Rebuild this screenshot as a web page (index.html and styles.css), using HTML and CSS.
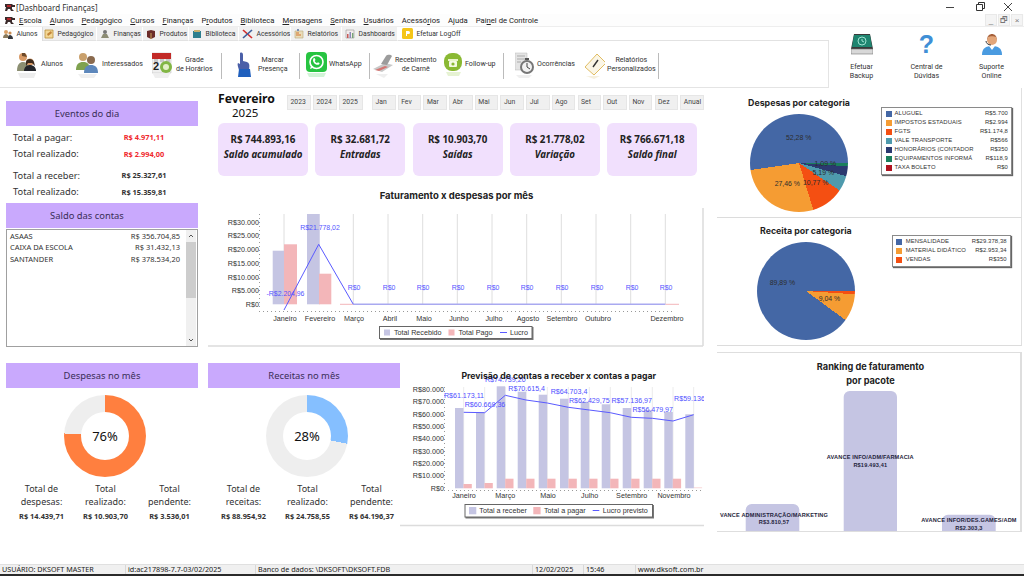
FILE: index.html
```html
<!DOCTYPE html>
<html lang="pt-BR">
<head>
<meta charset="utf-8">
<title>[Dashboard Finanças]</title>
<link rel="stylesheet" href="styles.css">
</head>
<body>
<div class="app">
  <header class="titlebar">
    <svg class="logo" width="10" height="10" viewBox="0 0 10 10"><path d="M0 2h7l1 1h2v2H7v2l2 2H6L5 7H3L2 9H0l1-4H0z" fill="#3a2a2a"/><path d="M2 3h4v2H2z" fill="#b3262b"/></svg>
    <span class="title-text">[Dashboard Finanças]</span>
    <div class="winbtns">
      <svg width="78" height="12" viewBox="0 0 78 12"><path d="M0 6.5h8" stroke="#444"/><path d="M30.5 3.5h6v6h-6zM32.5 3.5v-2h6v6h-2" fill="none" stroke="#333"/><path d="M58 2l8 8M66 2l-8 8" stroke="#444"/></svg>
    </div>
  </header>
  <nav class="menubar">
    <svg class="logo" width="10" height="10" viewBox="0 0 10 10"><path d="M0 2h7l1 1h2v2H7v2l2 2H6L5 7H3L2 9H0l1-4H0z" fill="#3a2a2a"/><path d="M2 3h4v2H2z" fill="#b3262b"/></svg>
    <span class="menu-item"><u>E</u>scola</span><span class="menu-item"><u>A</u>lunos</span><span class="menu-item"><u>P</u>edagógico</span><span class="menu-item"><u>C</u>ursos</span><span class="menu-item"><u>F</u>inanças</span><span class="menu-item">P<u>r</u>odutos</span><span class="menu-item"><u>B</u>iblioteca</span><span class="menu-item"><u>M</u>ensagens</span><span class="menu-item"><u>S</u>enhas</span><span class="menu-item"><u>U</u>suários</span><span class="menu-item">Acessó<u>r</u>ios</span><span class="menu-item">A<u>j</u>uda</span><span class="menu-item">Pai<u>n</u>el de Controle</span>
    <div class="mdi"><span class="mdi-btn">_</span><span class="mdi-btn">🗗</span><span class="mdi-btn">×</span></div>
  </nav>

  <section class="toolbar">
    <div class="toolbar-left">
      <div class="tabs">
        <span class="tab tab-active"><svg width="10" height="10" viewBox="0 0 10 10"><circle cx="3" cy="3" r="2" fill="#d9a066"/><path d="M0 9c0-3 2-4 3-4s3 1 3 4z" fill="#8a7a5c"/><circle cx="7" cy="4" r="1.6" fill="#c98d52"/><path d="M5 10c0-3 1-4 2-4s3 1 3 4z" fill="#33363c"/></svg>Alunos</span>
        <span class="tab"><svg width="10" height="10" viewBox="0 0 10 10"><path d="M1 1h8v8H1z" fill="#f3d795" stroke="#b98f3b" stroke-width=".8"/><path d="M3 5l4-3 1 2-4 3z" fill="#c2853a"/></svg>Pedagógico</span>
        <span class="tab"><svg width="10" height="10" viewBox="0 0 10 10"><circle cx="5" cy="3" r="2" fill="#777"/><path d="M1 9l2-4h4l2 4z" fill="#8c8c74"/></svg>Finanças</span>
        <span class="tab"><svg width="10" height="10" viewBox="0 0 10 10"><path d="M1 2l4-1 4 1v6l-4 2-4-2z" fill="#6c2d2a"/><path d="M5 4v6" stroke="#c9a35a"/></svg>Produtos</span>
        <span class="tab"><svg width="10" height="10" viewBox="0 0 10 10"><path d="M1 2h8v7H1z" fill="#2d7f8e"/><path d="M2 1h6v2H2z" fill="#c9b06e"/></svg>Biblioteca</span>
        <span class="tab"><svg width="11" height="10" viewBox="0 0 11 10"><path d="M1 1l9 8" stroke="#d22d2d" stroke-width="1.6"/><path d="M10 1L1 9" stroke="#3d5f9b" stroke-width="1.6"/></svg>Acessórios</span>
        <span class="tab"><svg width="10" height="10" viewBox="0 0 10 10"><path d="M1 2h8v7H1z" fill="#eadcb8" stroke="#b9a77a" stroke-width=".6"/><path d="M2 4h3M2 6h5" stroke="#d0732f"/><path d="M3 0h2v2H3z" fill="#7a8fb5"/></svg>Relatórios</span>
        <span class="tab"><svg width="10" height="10" viewBox="0 0 10 10"><path d="M1 1h8v8H1z" fill="#f3ecec" stroke="#999" stroke-width=".6"/><path d="M2 5h1.5v4H2z" fill="#c95757"/><path d="M4.500 3H6v6H4.500z" fill="#8a8ab8"/><path d="M7 4h1.400v5H7z" fill="#77a377"/></svg>Dashboards</span>
        <span class="tab tab-plain"><svg width="11" height="11" viewBox="0 0 11 11"><rect width="11" height="11" rx="1.5" fill="#f5c518"/><path d="M4 3h2.500a1.500 1.500 0 010 3H5v2H4z" fill="#fff"/></svg>Efetuar LogOff</span>
      </div>
      <div class="ribbon">
        <div class="rib-item"><svg width="23" height="27" viewBox="0 0 23 27"><circle cx="7" cy="5" r="4" fill="#d89a66"/><path d="M6 1h3l2 4-5-1z" fill="#6c4a2a"/><path d="M1 19c0-7 3-9 6-9s4 1 5 3v6z" fill="#8c8f72"/><circle cx="14" cy="10" r="3.500" fill="#d89a66"/><path d="M10 10c0-4 7-4 8 0l1 4-3-3h-4l-2 3z" fill="#3c2a1c"/><path d="M8 19c0-4 3-6 6-6s6 2 6 6z" fill="#23252b"/><path d="M2 21h18l-2 5H4z" fill="#e6e6e6" opacity=".7"/></svg><span class="rib-label">Alunos</span></div>
        <div class="rib-item"><svg width="24" height="27" viewBox="0 0 24 27"><circle cx="7" cy="5" r="4" fill="#c9a06c"/><path d="M0 18c0-6 3-8 7-8s6 2 6 4v4z" fill="#7fa24f"/><circle cx="15" cy="8" r="4" fill="#8a6a4e"/><path d="M8 21c0-6 3-8 7-8s7 2 7 8z" fill="#5d87bb"/><path d="M2 22h19l-3 4H5z" fill="#e8e8e8" opacity=".7"/></svg><span class="rib-label">Interessados</span></div>
        <div class="rib-item"><svg width="22" height="27" viewBox="0 0 22 27"><path d="M0 1h19v20H0z" fill="#efefef" stroke="#bbb" stroke-width=".5"/><path d="M0 1h19v6H0z" fill="#c22a27"/><path d="M2 7h4v3H2zM8 7h4v3H8zM14 7h4v3h-4z" fill="#333" opacity=".2"/><text x="1" y="18" class="cal-num">2</text><circle cx="14" cy="15" r="6" fill="#82b644"/><circle cx="14" cy="15" r="3" fill="#e4f0c8"/><path d="M1 22h17l-2 4H3z" fill="#e8e8e8" opacity=".7"/></svg><span class="rib-label">Grade<br>de Horários</span></div>
        <div class="rib-sep"></div>
        <div class="rib-item"><svg width="21" height="27" viewBox="0 0 21 27"><path d="M5 1c2-1 3 0 3 2v6l4 1c2 1 3 2 2 8H4c-1-3-2-6-1-7l2 1z" fill="#4a5fa8"/><path d="M4 17h11l1 8H3z" fill="#1f5fbd"/></svg><span class="rib-label">Marcar<br>Presença</span></div>
        <div class="rib-sep"></div>
        <div class="rib-item"><svg width="21" height="27" viewBox="0 0 21 27"><rect width="21" height="20" y="0" rx="4" fill="#27c441"/><circle cx="10.500" cy="10" r="6.500" fill="none" stroke="#fff" stroke-width="1.6"/><path d="M4 17l1.300-4 2.600 2.600z" fill="#fff"/><path d="M7.500 6.500c1-1 1.500 0 2 1.500l-.8 1c.5 1 1.200 1.600 2.300 2.100l1-.8c1.400.6 2.100 1 1.200 2-2.500 2-7.800-2-5.700-5.800z" fill="#fff"/><path d="M1 21h19l-2 4H3z" fill="#bff0c6" opacity=".7"/></svg><span class="rib-label">WhatsApp</span></div>
        <div class="rib-sep"></div>
        <div class="rib-item"><svg width="20" height="27" viewBox="0 0 20 27"><path d="M0 17l12-6 8 2-11 7z" fill="#c8c8c8"/><path d="M8 12l5-8c2-2 5-1 6 0l-5 9z" fill="#9c9c9c"/><path d="M2 18l10-4 3 1-9 4z" fill="#d9534f" opacity=".7"/><path d="M3 22h12l-4 4z" fill="#e8e8e8" opacity=".7"/></svg><span class="rib-label">Recebimento<br>de Carnê</span></div>
        <div class="rib-item"><svg width="19" height="27" viewBox="0 0 19 27"><rect width="18" height="18" x="0" y="1" rx="8" fill="#8ab933"/><path d="M4 7h10v2H4z" fill="#e9f5c9"/><rect x="5" y="9" width="8" height="6" rx="1" fill="#f4f9e2"/><circle cx="9" cy="12" r="1.600" fill="#8ab933"/><path d="M2 20h15l-2 4H4z" fill="#dcecc0" opacity=".7"/></svg><span class="rib-label">Follow-up</span></div>
        <div class="rib-sep"></div>
        <div class="rib-item"><svg width="20" height="27" viewBox="0 0 20 27"><path d="M0 1h12v17H0z" fill="#e4e4e4" stroke="#bbb" stroke-width=".5"/><path d="M2 4h8M2 7h8M2 10h4" stroke="#aaa"/><circle cx="12" cy="15" r="7" fill="#777"/><circle cx="12" cy="15" r="5" fill="#f2f2f2"/><path d="M12 11v4l3 2" stroke="#444" fill="none"/><path d="M10 6h4v2h-4z" fill="#555"/><path d="M1 23h16l-3 3H4z" fill="#e8e8e8" opacity=".7"/></svg><span class="rib-label">Ocorrências</span></div>
        <div class="rib-item"><svg width="20" height="27" viewBox="0 0 20 27"><path d="M0 15L12 2l9 9L9 23z" fill="#fbf6e6" stroke="#e0bc62"/><path d="M8 15l5-7" stroke="#333" stroke-width="1.400"/><path d="M1 24h14l-6 3z" fill="#f0e6c8" opacity=".6"/></svg><span class="rib-label">Relatórios<br>Personalizados</span></div>
        <div class="rib-sep"></div>
      </div>
    </div>
    <div class="tools">
      <div class="tool"><svg width="22" height="22" viewBox="0 0 22 22"><path d="M3 1h16l3 15H0z" fill="#3a3a3a"/><path d="M3 2h16l2 12H1z" fill="#1f8570"/><circle cx="11" cy="8" r="4" fill="none" stroke="#9fe3d2"/><path d="M11 6v2l2 1" stroke="#9fe3d2" fill="none"/><path d="M0 16h22v5H0z" fill="#d8d8d8" stroke="#777" stroke-width=".6"/></svg><span class="tool-label">Efetuar<br>Backup</span></div>
      <div class="tool"><span class="qmark">?</span><span class="tool-label">Central de<br>Dúvidas</span></div>
      <div class="tool"><svg width="22" height="22" viewBox="0 0 22 22"><circle cx="11" cy="7" r="5" fill="#e3a679"/><path d="M6 7c0-8 10-8 10 0l-1-3c-2-1-6-1-8 0z" fill="#a5603a"/><path d="M1 22c0-7 4-9 10-9s10 2 10 9z" fill="#4a9be0"/><path d="M8 13l3 4 3-4z" fill="#fff"/><path d="M5 8c0 2 2 4 5 4" fill="none" stroke="#333"/></svg><span class="tool-label">Suporte<br>Online</span></div>
    </div>
  </section>

  <main class="content">
    <section class="row-top">
      <aside class="col-left">
        <h2 class="heading heading-side">Eventos do dia</h2>
        <div class="events">
          <div class="event"><span>Total a pagar:</span><b class="neg">R$ 4.971,11</b></div>
          <div class="event"><span>Total realizado:</span><b class="neg">R$ 2.994,00</b></div>
          <div class="event event-gap"><span>Total a receber:</span><b>R$ 25.327,61</b></div>
          <div class="event"><span>Total realizado:</span><b>R$ 15.359,81</b></div>
        </div>
        <h2 class="heading heading-side heading-tall">Saldo das contas</h2>
        <div class="accounts">
          <div class="account-rows">
            <div class="account"><span>ASAAS</span><span>R$ 356.704,85</span></div>
            <div class="account"><span>CAIXA DA ESCOLA</span><span>R$ 31.432,13</span></div>
            <div class="account"><span>SANTANDER</span><span>R$ 378.534,20</span></div>
          </div>
          <div class="scrollbar">
            <svg width="10" height="10" viewBox="0 0 10 10"><path d="M3 6l2-2 2 2" fill="none" stroke="#555"/></svg>
            <div class="thumb"></div>
            <div class="track"></div>
            <svg width="10" height="10" viewBox="0 0 10 10"><path d="M3 4l2 2 2-2" fill="none" stroke="#555"/></svg>
          </div>
        </div>
      </aside>

      <div class="col-mid">
        <div class="period">
          <div class="period-name"><strong>Fevereiro</strong><span>2025</span></div>
          <div class="btns btns-year"><span class="btn">2023</span><span class="btn">2024</span><span class="btn">2025</span></div>
          <div class="btns btns-month"><span class="btn">Jan</span><span class="btn">Fev</span><span class="btn">Mar</span><span class="btn">Abr</span><span class="btn">Mai</span><span class="btn">Jun</span><span class="btn">Jul</span><span class="btn">Ago</span><span class="btn">Set</span><span class="btn">Out</span><span class="btn">Nov</span><span class="btn">Dez</span><span class="btn">Anual</span></div>
        </div>
        <div class="cards">
          <div class="card"><b>R$ 744.893,16</b><i>Saldo acumulado</i></div>
          <div class="card"><b>R$ 32.681,72</b><i>Entradas</i></div>
          <div class="card"><b>R$ 10.903,70</b><i>Saídas</i></div>
          <div class="card"><b>R$ 21.778,02</b><i>Variação</i></div>
          <div class="card"><b>R$ 766.671,18</b><i>Saldo final</i></div>
        </div>
        <svg class="chart" width="496" height="172" viewBox="208 176 496 172">
          <text x="456.500" y="199" class="c-title c-center">Faturamento x despesas por mês</text>
          <path d="M703 208v138M208 346h495" class="c-frame"/>
          <path d="M284 214v90M318.700 214v90M353.300 214v90M388 214v90M422.700 214v90M457.300 214v90M492 214v90M526.700 214v90M561.300 214v90M596 214v90M630.700 214v90M665.300 214v90" class="c-grid"/>
          <path d="M259.500 214v96M259 311.500h415" class="c-ticks"/>
          <rect x="272.700" y="250.700" width="11.300" height="53.600" class="c-bar"/>
          <rect x="284" y="244.300" width="13" height="60" class="c-pink"/>
          <rect x="307" y="214" width="12.700" height="90.300" class="c-bar"/>
          <rect x="319" y="273.700" width="12.300" height="30.600" class="c-pink"/>
          <path d="M340 304.300h13M665.300 304.300h13.700" class="c-pink-line"/>
          <path d="M353.300 304.300h312" class="c-zero"/>
          <path d="M284 310L318.700 244.300 353.300 304.300" class="c-line"/>
          <g class="c-axis c-end">
            <text x="259" y="224.500">R$30.000</text><text x="259" y="238">R$25.000</text><text x="259" y="251.700">R$20.000</text><text x="259" y="265.500">R$15.000</text><text x="259" y="279.500">R$10.000</text><text x="259" y="293">R$5.000</text><text x="259" y="307">R$0</text>
          </g>
          <g class="c-axis c-center">
            <text x="285" y="320.500">Janeiro</text><text x="320" y="320.500">Fevereiro</text><text x="354" y="320.500">Março</text><text x="390" y="320.500">Abril</text><text x="424" y="320.500">Maio</text><text x="459" y="320.500">Junho</text><text x="494" y="320.500">Julho</text><text x="528" y="320.500">Agosto</text><text x="562" y="320.500">Setembro</text><text x="598" y="320.500">Outubro</text><text x="667" y="320.500">Dezembro</text>
          </g>
          <g class="c-val c-center">
            <text x="320" y="229.500">R$21.778,02</text><text x="285.500" y="295.500">-R$2.204,96</text>
            <text x="354" y="290">R$0</text><text x="389" y="290">R$0</text><text x="423" y="290">R$0</text><text x="458" y="290">R$0</text><text x="493" y="290">R$0</text><text x="527" y="290">R$0</text><text x="562" y="290">R$0</text><text x="597" y="290">R$0</text><text x="632" y="290">R$0</text><text x="666" y="290">R$0</text>
          </g>
          <rect x="379.500" y="326.500" width="152.500" height="12" class="c-legend"/>
          <rect x="384" y="329.500" width="6" height="6" class="c-bar"/>
          <rect x="448.500" y="329.500" width="6" height="6" class="c-pink"/>
          <path d="M500 332.500h7" class="c-line"/>
          <g class="c-axis"><text x="394" y="335">Total Recebido</text><text x="458.500" y="335">Total Pago</text><text x="510" y="335">Lucro</text></g>
        </svg>
      </div>

      <div class="col-right">
        <div class="cat cat-a">
          <div class="pie-col">
            <h3 class="cat-title">Despesas por categoria</h3>
            <div class="pie pie-desp">
              <span class="pie-lbl lbl-a1">52,28 %</span><span class="pie-lbl lbl-a2">1,09 %</span><span class="pie-lbl lbl-a3">5,19 %</span><span class="pie-lbl lbl-a4">10,77 %</span><span class="pie-lbl lbl-a5">27,46 %</span>
            </div>
          </div>
          <div class="legend">
            <div class="lg"><i class="s-blue"></i><span>ALUGUEL</span><em>R$5.700</em></div>
            <div class="lg"><i class="s-orange"></i><span>IMPOSTOS ESTADUAIS</span><em>R$2.994</em></div>
            <div class="lg"><i class="s-red"></i><span>FGTS</span><em>R$1.174,8</em></div>
            <div class="lg"><i class="s-teal"></i><span>VALE TRANSPORTE</span><em>R$566</em></div>
            <div class="lg"><i class="s-navy"></i><span>HONORÁRIOS (CONTADOR</span><em>R$350</em></div>
            <div class="lg"><i class="s-green"></i><span>EQUIPAMENTOS INFORMÁ</span><em>R$118,9</em></div>
            <div class="lg"><i class="s-crimson"></i><span>TAXA BOLETO</span><em>R$0</em></div>
          </div>
        </div>
        <div class="cat cat-b">
          <div class="pie-col">
            <h3 class="cat-title">Receita por categoria</h3>
            <div class="pie pie-rec">
              <span class="pie-lbl lbl-b1">89,89 %</span><span class="pie-lbl lbl-b2">9,04 %</span>
            </div>
          </div>
          <div class="legend">
            <div class="lg"><i class="s-blue"></i><span>MENSALIDADE</span><em>R$29.378,38</em></div>
            <div class="lg"><i class="s-orange"></i><span>MATERIAL DIDÁTICO</span><em>R$2.953,34</em></div>
            <div class="lg"><i class="s-red"></i><span>VENDAS</span><em>R$350</em></div>
          </div>
        </div>
      </div>
    </section>

    <section class="row-bottom">
      <div class="summary">
        <h2 class="heading">Despesas no mês</h2>
        <div class="donut donut-desp"><div class="donut-hole">76%</div></div>
        <div class="totals">
          <div class="total"><span>Total de<br>despesas:</span><b>R$ 14.439,71</b></div>
          <div class="total"><span>Total<br>realizado:</span><b>R$ 10.903,70</b></div>
          <div class="total"><span>Total<br>pendente:</span><b>R$ 3.536,01</b></div>
        </div>
      </div>
      <div class="summary">
        <h2 class="heading">Receitas no mês</h2>
        <div class="donut donut-rec"><div class="donut-hole">28%</div></div>
        <div class="totals">
          <div class="total"><span>Total de<br>receitas:</span><b>R$ 88.954,92</b></div>
          <div class="total"><span>Total<br>realizado:</span><b>R$ 24.758,55</b></div>
          <div class="total"><span>Total<br>pendente:</span><b>R$ 64.196,37</b></div>
        </div>
      </div>
      <svg class="forecast" width="304" height="180" viewBox="400 348 304 180">
        <path d="M463.700 387v101M484.700 387v101M505.300 387v101M526 387v101M547.300 387v101M568.300 387v101M589.300 387v101M610.300 387v101M631.300 387v101M652.300 387v101M673 387v101M693.700 387v101" class="c-grid-light"/>
        <path d="M444.500 387v102M444 490.500h260" class="c-ticks"/>
        <g class="c-bar">
          <rect x="455" y="408" width="8.500" height="80.300"/><rect x="476" y="412.300" width="8.500" height="76"/><rect x="496.700" y="386.300" width="8.500" height="102"/><rect x="517.700" y="391.700" width="8.500" height="96.600"/><rect x="538.700" y="394.700" width="8.500" height="93.600"/><rect x="560" y="398.700" width="8.500" height="89.600"/><rect x="580.700" y="401.700" width="8.500" height="86.600"/><rect x="601.700" y="404.300" width="8.500" height="84"/><rect x="622.700" y="408" width="8.500" height="80.300"/><rect x="643.700" y="410" width="8.500" height="78.300"/><rect x="664.300" y="412" width="8.500" height="76.300"/><rect x="685.300" y="414.300" width="8.500" height="74"/>
        </g>
        <g class="c-pink">
          <rect x="463.500" y="484" width="8.300" height="4.300"/><rect x="484.500" y="483" width="8.300" height="5.300"/><rect x="505.200" y="478.700" width="8.300" height="9.600"/><rect x="526.200" y="478.700" width="8.300" height="9.600"/><rect x="547.200" y="478.700" width="8.300" height="9.600"/><rect x="568.500" y="478.700" width="8.300" height="9.600"/><rect x="589.200" y="478.700" width="8.300" height="9.600"/><rect x="610.200" y="478.700" width="8.300" height="9.600"/><rect x="631.200" y="478.700" width="8.300" height="9.600"/><rect x="652.200" y="478.700" width="8.300" height="9.600"/><rect x="672.800" y="478.700" width="8.300" height="9.600"/><rect x="693.800" y="487" width="8.300" height="1.300" opacity=".4"/>
        </g>
        <path d="M463.700 412.300L484.700 412.700 505.300 395.300 526 400 547.300 403 568.300 407.300 589.300 410 610.300 412.700 631.300 417.300 652.300 418.300 673 421 693.700 414.700" class="c-line"/>
        <g class="c-axis c-end">
          <text x="444" y="391.800">R$80.000</text><text x="444" y="404.200">R$70.000</text><text x="444" y="416.500">R$60.000</text><text x="444" y="428.800">R$50.000</text><text x="444" y="441.200">R$40.000</text><text x="444" y="453.500">R$30.000</text><text x="444" y="465.800">R$20.000</text><text x="444" y="478.200">R$10.000</text><text x="444" y="490.800">R$0</text>
        </g>
        <g class="c-axis c-center">
          <text x="464" y="498">Janeiro</text><text x="505.300" y="498">Março</text><text x="548" y="498">Maio</text><text x="589.700" y="498">Julho</text><text x="631.700" y="498">Setembro</text><text x="674" y="498">Novembro</text>
        </g>
        <g class="c-val2 c-center">
          <text x="464" y="398">R$61.173,11</text><text x="485" y="407">R$60.669,36</text><text x="505.300" y="381.500">R$74.739,20</text><text x="526.700" y="390.500">R$70.615,4</text><text x="569" y="393.500">R$64.703,4</text><text x="589.300" y="402.500">R$62.429,75</text><text x="631.700" y="403">R$57.136,97</text><text x="652.700" y="411.500">R$56.479,97</text><text x="689.500" y="401">R$59.136</text>
        </g>
        <text x="558.700" y="379" class="c-title2 c-center">Previsão de contas a receber x contas a pagar</text>
        <rect x="465" y="504.500" width="187.500" height="12.500" class="c-legend"/>
        <rect x="469" y="507" width="7.300" height="7.300" class="c-bar"/>
        <rect x="533.300" y="507" width="7.300" height="7.300" class="c-pink"/>
        <path d="M592.700 510.500h6.600" class="c-line"/>
        <g class="c-axis"><text x="479.300" y="513">Total a receber</text><text x="544" y="513">Total a pagar</text><text x="602.700" y="513">Lucro previsto</text></g>
        <path d="M400 525.500h304" class="c-frame"/>
      </svg>
      <div class="ranking">
        <svg width="303" height="178" viewBox="717 353 303 178">
          <text x="870.500" y="370" class="c-title3 c-center">Ranking de faturamento</text>
          <text x="870.500" y="384" class="c-title3 c-center">por pacote</text>
          <path d="M745.700 531v-21a6 6 0 016-6h41.600a6 6 0 016 6v21z" class="c-bar"/>
          <path d="M843.700 531V397a6 6 0 016-6H891a6 6 0 016 6v134z" class="c-bar"/>
          <path d="M942 531v-10.300a6 6 0 016-6h41.700a6 6 0 016 6V531z" class="c-bar"/>
          <g class="c-rank c-center">
            <text x="774" y="516.500">VANCE ADMINISTRAÇÃO/MARKETING</text><text x="774" y="524">R$3.810,57</text>
            <text x="870.300" y="459">AVANCE INFO/ADM/FARMACIA</text><text x="870.300" y="467">R$19.493,41</text>
            <text x="969" y="521.500">AVANCE INFOR/DES.GAMES/ADM</text><text x="969" y="529.500">R$2.303,3</text>
          </g>
        </svg>
      </div>
    </section>
  </main>

  <footer class="status">
    <span class="st st1">USUÁRIO: DKSOFT MASTER</span>
    <span class="st st2">id:ac217898-7.7-03/02/2025</span>
    <span class="st st3">Banco de dados: \DKSOFT\DKSOFT.FDB</span>
    <span class="st st4">12/02/2025</span>
    <span class="st st5">15:46</span>
    <span class="st st6">www.dksoft.com.br</span>
  </footer>
  <div class="taskbar"></div>
</div>
</body>
</html>
```

FILE: styles.css
```css
* { box-sizing: border-box; margin: 0; padding: 0; }
html, body { width: 1024px; height: 576px; overflow: hidden; background: #fff; }
body { font-family: "Noto Sans", "Open Sans", sans-serif; color: #222; }
.app { width: 1024px; height: 576px; display: flex; flex-direction: column; overflow: hidden; background: #fff; }

/* title + menu */
.titlebar { height: 14px; display: flex; align-items: center; padding-left: 5px; font-size: 8px; color: #333; }
.title-text { margin-left: 1px; }
.winbtns { margin-left: auto; width: 78px; height: 12px; }
.winbtns svg { display: block; }
.menubar { height: 13px; display: flex; align-items: center; padding-left: 5px; font: 7.700px Roboto, sans-serif; background: #fdfdfd; border-bottom: 1px solid #eee; color: #222; }
.menu-item { margin-right: 8px; white-space: nowrap; }
.logo + .menu-item { margin-left: 4px; }
.mdi { margin-left: auto; margin-right: 1px; display: flex; gap: 1px; }
.mdi-btn { width: 12px; height: 12px; font: 8px/11px "Liberation Sans", sans-serif; text-align: center; color: #777; background: #f4f4f4; border: 1px solid #e9e9e9; }

/* toolbar */
.toolbar { display: flex; height: 61px; }
.toolbar-left { width: 832px; display: flex; flex-direction: column; }
.tabs { height: 14px; display: flex; font: 6.800px Roboto, sans-serif; }
.tab { flex: none; display: flex; align-items: center; gap: 3.500px; padding: 0 0 0 3px; background: #f0f0f0; border-right: 1px solid #fff; border-bottom: 1px solid #e2e2e2; white-space: nowrap; color: #333; }
.tab svg { flex: none; }
.tab:nth-child(2) { width: 54px; padding-left: 1px; }
.tab:nth-child(3) { width: 46px; }
.tab:nth-child(4) { width: 46px; }
.tab:nth-child(5) { width: 50px; }
.tab:nth-child(6) { width: 52px; }
.tab:nth-child(7) { width: 51px; }
.tab:nth-child(8) { width: 56px; }
.tab-active { width: 43px; background: #fff; border-bottom: 0; border-right: 1px solid #ddd; }
.tab-plain { background: #fff; padding-left: 4px; border: 0; border-bottom: 1px solid #e2e2e2; flex: 1; }
.ribbon { height: 47px; display: grid; grid-template-columns: 60px 76px 69px 14px 64px 7px 63px 4px 71px 59px 12px 70px 73px 1px; padding-left: 16px; align-items: center; border: 1px solid #e4e4e4; border-top: 0; border-left: 0; border-bottom-width: 1.5px; font: 7.100px Roboto, sans-serif; color: #333; }
.rib-item { display: flex; align-items: center; gap: 2px; height: 27px; margin-top: 3px; }
.rib-item svg { flex: none; }
.rib-label { flex: none; text-align: center; line-height: 8.500px; margin-bottom: 2px; white-space: nowrap; }
.rib-sep { width: 1px; height: 26px; background: #bbb; margin-top: 3px; }
.cal-num { font: bold 11px "Liberation Sans", sans-serif; fill: #222; }
.tools { flex: 1; display: grid; grid-template-columns: 65px 65px 65px; padding: 6px 0 0 0; font: 7.100px Roboto, sans-serif; color: #333; }
.tool { display: flex; flex-direction: column; align-items: center; }
.tool svg { height: 22px; }
.qmark { height: 22px; font: bold 25px/22px "Liberation Sans", sans-serif; color: #3f8fd6; }
.tool-label { margin-top: 7px; line-height: 9px; text-align: center; white-space: nowrap; }

/* layout */
.content { flex: 1; display: flex; flex-direction: column; padding-left: 6px; }
.row-top { display: flex; height: 260px; }
.row-bottom { display: flex; }
.col-left { width: 192px; margin-right: 10px; padding-top: 13px; }
.col-mid { width: 496px; margin-right: 13px; }
.col-right { width: 305px; }

.heading { height: 25px; background: #c9a9fd; font-size: 9.400px; line-height: 25px; font-weight: 400; text-align: center; color: #3a2e57; }
.heading-side { padding-right: 30px; }
.heading-tall { height: 25.500px; margin-top: 3px; }

.events { padding: 3px 0 0 7px; }
.event { display: grid; grid-template-columns: 100px 62px; height: 16.400px; align-items: center; font-size: 9.300px; color: #333; }
.event b { font-size: 7.400px; font-weight: 700; text-align: center; white-space: nowrap; }
.event-gap { margin-top: 5.300px; }
.neg { color: #f0282d; }

.accounts { height: 118px; display: flex; border: 1px solid #a0a0a0; margin-top: .5px; padding-top: 1px; }
.account-rows { flex: 1; padding: 0 6px 0 3px; }
.account { display: flex; justify-content: space-between; height: 11.500px; font-size: 7.500px; line-height: 11.500px; color: #333; white-space: nowrap; }
.scrollbar { width: 10px; margin-right: 1px; margin-top: -1px; display: flex; flex-direction: column; background: #f0f0f0; }
.scrollbar svg { flex: none; display: block; height: 12px; }
.thumb { height: 56px; background: #cdcdcd; }
.track { flex: 1; }

/* mid */
.period { display: flex; height: 31px; padding: 4px 0 0 10px; }
.period-name { width: 69px; display: flex; flex-direction: column; align-items: flex-start; line-height: 14px; color: #111; }
.period-name strong { font-size: 12.200px; font-weight: 700; }
.period-name span { font-size: 11.500px; margin-left: 14px; }
.btns { display: flex; margin-top: 3px; height: 15.300px; }
.btn { height: 100%; border: 1px solid #e6e6e6; background: #f0f0f0; font: 6.800px/13px Roboto, sans-serif; padding-left: 2.500px; color: #444; white-space: nowrap; overflow: hidden; }
.btns-year { gap: 2px; margin-right: 9px; }
.btns-year .btn { width: 24px; }
.btns-month { gap: 2.200px; }
.btns-month .btn { width: 23.500px; }
.cards { display: flex; gap: 7.300px; padding-left: 10px; margin-top: 4px; }
.card { width: 90px; height: 53px; background: #f1e0fd; border-radius: 6px; display: flex; flex-direction: column; align-items: center; padding-top: 10px; color: #222; white-space: nowrap; }
.card b { font-size: 9.800px; line-height: 13px; }
.card i { font-size: 9.700px; font-weight: 700; line-height: 13px; margin-top: 1.500px; }

/* chart primitives */
svg { display: block; }
.chart, .forecast { flex: none; }
.c-title { font: 700 9.500px "Inter", sans-serif; fill: #222; }
.c-title2 { font: 700 8.700px "Inter", sans-serif; fill: #1c1c1c; }
.c-title3 { font: 700 9.200px "Inter", sans-serif; fill: #222; }
.c-center { text-anchor: middle; }
.c-end { text-anchor: end; }
.c-frame { fill: none; stroke: #dcdcdc; stroke-width: 1.5; }
.c-grid { fill: none; stroke: #dedede; stroke-width: 1; }
.c-grid-light { fill: none; stroke: #ececec; stroke-width: 1; }
.c-ticks { fill: none; stroke: #999; stroke-width: 1; stroke-dasharray: 1 3; }
.c-bar { fill: #c5c5e3; }
.c-pink { fill: #f3b6b9; }
.c-pink-line { fill: none; stroke: #f3b6b9; }
.c-zero { fill: none; stroke: #a9a9f0; stroke-width: 1.6; }
.c-line { fill: none; stroke: #5a5aff; stroke-width: 1; }
.c-axis text { font: 7.200px "Liberation Sans", sans-serif; fill: #333; }
.c-val text { font: 6.900px "Liberation Sans", sans-serif; fill: #5454ff; }
.c-val2 text { font: 7.100px "Liberation Sans", sans-serif; fill: #4f4fff; }
.c-legend { fill: #fff; stroke: #666; stroke-width: 1; filter: drop-shadow(1px 1px .6px #777); }
.c-rank text { font: 700 5.600px "Liberation Sans", sans-serif; fill: #1f1f3c; letter-spacing: .16px; }

/* pies */
.cat { display: flex; border-right: 1.500px solid #e0e0e0; border-bottom: 1.500px solid #dcdcdc; }
.cat-a { height: 130px; padding-top: 9px; }
.cat-b { height: 128px; padding-top: 6.500px; }
.pie-col { display: flex; flex-direction: column; align-items: center; }
.cat-a .pie-col { width: 164px; }
.cat-b .pie-col { width: 174.700px; padding-left: 3px; }
.cat-title { font: 700 8.800px/12px "Inter", sans-serif; color: #1f1f1f; white-space: nowrap; }
.pie { position: relative; width: 98px; height: 98px; border-radius: 50%; margin-top: 5px; }
.pie-desp { background: conic-gradient(#4467a5 0 90deg, #1a7f5c 90deg 93.900deg, #2b3a70 93.900deg 105.500deg, #4e9aad 105.500deg 124.200deg, #f44f12 124.200deg 163deg, #f59c33 163deg 261.800deg, #4467a5 261.800deg 360deg); }
.pie-rec { background: conic-gradient(#4467a5 0 90deg, #f44f12 90deg 93.850deg, #f59c33 93.850deg 126.400deg, #4467a5 126.400deg 360deg); }
.pie-lbl { position: absolute; transform: translate(-50%, -50%); font: 6.900px/8px "Liberation Sans", sans-serif; color: #2c2c2c; white-space: nowrap; }
.lbl-a1 { left: 48.700px; top: 24px; }
.lbl-a2 { left: 75.300px; top: 49.700px; }
.lbl-a3 { left: 73.300px; top: 59.300px; }
.lbl-a4 { left: 65.700px; top: 69.300px; }
.lbl-a5 { left: 37.300px; top: 70.300px; }
.lbl-b1 { left: 25.600px; top: 41.700px; }
.lbl-b2 { left: 72.600px; top: 57.700px; }
.legend { border: 1px solid #8a8a8a; box-shadow: 1px 1px 1px #666; padding: 1px 3px 2px 3.500px; align-self: flex-start; font: 5.900px/9px "Liberation Sans", sans-serif; color: #333; }
.cat-a .legend { width: 131px; margin-top: 10px; }
.cat-b .legend { width: 119px; margin-top: 10.500px; }
.lg { display: flex; align-items: center; height: 9px; white-space: nowrap; }
.lg i { flex: none; width: 6px; height: 6px; margin-right: 3px; }
.cat-b .lg i { margin-right: 3.500px; }
.lg span { flex: 1; letter-spacing: .1px; }
.lg em { font-style: normal; letter-spacing: .1px; }
.s-blue { background: #4467a5; }
.s-orange { background: #f59c33; }
.s-red { background: #f44f12; }
.s-teal { background: #4e9aad; }
.s-navy { background: #2b3a70; }
.s-green { background: #1a7f5c; }
.s-crimson { background: #b0121f; }

/* bottom */
.summary { width: 192px; margin-right: 10px; padding-top: 15px; }
.summary + .summary { margin-right: 0; }
.donut { width: 82px; height: 82px; border-radius: 50%; margin: 7px 0 0 58px; display: flex; align-items: center; justify-content: center; }
.donut-desp { background: conic-gradient(#ff7f3f 0 273.600deg, #eeeeee 273.600deg 360deg); }
.donut-rec { background: conic-gradient(#85bfff 0 100.800deg, #eeeeee 100.800deg 360deg); }
.donut-hole { width: 48px; height: 48px; border-radius: 50%; background: #fff; text-align: center; font-size: 13px; line-height: 48px; color: #111; }
.totals { display: grid; grid-template-columns: 64px 64px 64px; padding-left: 3.500px; margin-top: 6px; }
.total { display: flex; flex-direction: column; align-items: center; text-align: center; white-space: nowrap; color: #333; font-size: 9px; line-height: 12.700px; }
.total b { font-size: 7.400px; line-height: 12px; margin-top: 1.500px; }
.forecast { margin-right: 13px; }
.ranking { width: 305px; height: 180px; margin-top: 4px; border: solid #dedede; border-width: 1px 2px 1px 0; }

/* status */
.status { height: 10px; display: flex; background: #f0f0f0; border-top: 1px solid #e0e0e0; font-size: 7.200px; line-height: 9px; color: #222; white-space: nowrap; }
.st { padding-left: 2px; border-right: 1px solid #d8d8d8; overflow: hidden; }
.st1 { width: 126px; }
.st2 { width: 130px; }
.st3 { width: 277px; }
.st4 { width: 51px; }
.st5 { width: 52px; }
.st6 { flex: 1; border-right: 0; }
.taskbar { height: 2px; background: #2a2a2a; }
```
